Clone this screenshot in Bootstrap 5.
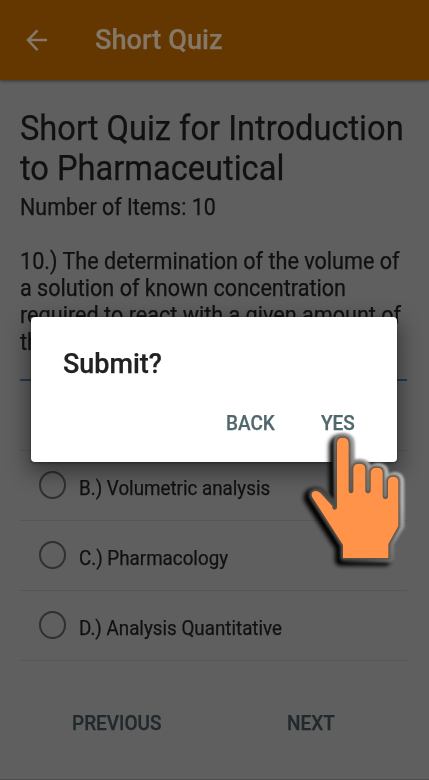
<!DOCTYPE html>
<html lang="en">
<head>
<meta charset="utf-8">
<meta name="viewport" content="width=device-width, initial-scale=1">
<title>Short Quiz</title>
<link href="https://cdn.jsdelivr.net/npm/bootstrap@5.3.0/dist/css/bootstrap.min.css" rel="stylesheet">
<style>
body{font-family:Roboto,sans-serif;background:#5f5f5f;color:#111;width:429px;height:780px;overflow:hidden}
.app-bar{height:80px;background:#643600;color:#857867;box-shadow:0 1px 3px rgba(0,0,0,.45);padding-left:26px}
.app-bar svg{width:21px;height:23px;margin-right:48px}
.fit{display:inline-block;transform-origin:0 50%;white-space:nowrap;transform:scaleX(.95);-webkit-text-stroke:.25px currentColor}
.bar-title{font-size:28px;font-weight:500;line-height:32px;transform:scaleX(.972)}
.quiz{padding:28px 22px 0 20px}
.quiz-title{font-size:34.4px;line-height:40.3px;font-weight:400}
.quiz-title .fit{transform:scaleX(.948)}
.body-text{font-size:23px;line-height:27px}
.body-text .fit{transform:scaleX(.939)}
.items .fit{transform:scaleX(.933)}
.items{padding-top:1px}
.question{margin-top:27px;height:105px}
.rule{height:2px;background:#1d3c59;margin-top:26px}
.option{height:70px;border-bottom:1px solid #565656;padding:0 0 0 19px}
.ring{width:27px;height:28px;border:2.8px solid #303030;border-radius:50%;margin-right:13px}
.option .option-text{font-size:20px;line-height:24px;padding-top:6px;transform:scaleX(.939)}
.nav-text{font-size:20px;line-height:24px;font-weight:500;color:#20292c}
.pager{padding:50px 70px 0 52px}
.scrim{position:absolute;inset:0}
.ask{position:absolute;left:30.5px;top:317px;width:366px;height:145px;background:#fff;border-radius:4px;box-shadow:0 8px 22px 3px rgba(0,0,0,.42),0 1px 3px rgba(0,0,0,.4);padding:30px 40px 0 32.5px}
.ask .ask-title{font-size:28px;line-height:33px;font-weight:500;color:#222;transform:scaleX(.963)}
.ask-btn{font-size:20px;line-height:24px;font-weight:500;color:#50686c}
.ask-actions{gap:43px;margin-top:31px}
.hand{position:absolute;left:290px;top:400px;width:139px;height:180px}
.foot{position:absolute;left:0;right:0;bottom:0;height:1px;background:#4c4c4c}
</style>
</head>
<body class="position-relative">
<header class="app-bar d-flex align-items-center">
<svg viewBox="0 0 21 24" fill="none" stroke="currentColor" stroke-width="2.6" preserveAspectRatio="none"><path d="M21 11.5H2M11.5 1.5L2 11.5L11.5 22"/></svg>
<span class="fit bar-title">Short Quiz</span>
</header>
<main class="quiz">
<h1 class="quiz-title m-0"><span class="fit">Short Quiz for Introduction</span><br><span class="fit">to Pharmaceutical</span></h1>
<div class="body-text items mt-1"><span class="fit">Number of Items: 10</span></div>
<div class="question body-text"><span class="fit">10.) The determination of the volume of</span><br><span class="fit">a solution of known concentration</span><br><span class="fit">required to react with a given amount of</span><br><span class="fit">the</span></div>
<div class="rule"></div>
<div class="options">
<div class="option"></div>
<div class="option d-flex align-items-center"><span class="ring"></span><span class="fit option-text">B.) Volumetric analysis</span></div>
<div class="option d-flex align-items-center"><span class="ring"></span><span class="fit option-text">C.) Pharmacology</span></div>
<div class="option d-flex align-items-center"><span class="ring"></span><span class="fit option-text">D.) Analysis Quantitative</span></div>
</div>
<div class="pager d-flex justify-content-between"><span class="fit nav-text">PREVIOUS</span><span class="fit nav-text">NEXT</span></div>
</main>
<div class="scrim">
<section class="ask" role="dialog" aria-label="Submit?">
<div><span class="fit ask-title">Submit?</span></div>
<div class="ask-actions d-flex justify-content-end"><span class="fit ask-btn">BACK</span><span class="fit ask-btn">YES</span></div>
</section>
<svg class="hand" viewBox="0 0 417 540">
<defs>
<path id="hand" d="M141 322V130Q141 113 158 113Q176 113 176 130V271Q176 280 183 280Q190 280 190 271V207Q190 191 208 191Q226 191 226 207V271Q226 280 234 280Q242 280 242 271V219Q242 203 260 203Q278 203 278 219V288Q278 297 286 297Q294 297 294 288V245Q294 230 310 230Q325 230 325 246V378L295 432V474H159V435L66 290Q62 276 75 273Q85 273 92 280L127 318V322Q127 329 134 329Q141 329 141 322Z"/>
<linearGradient id="bevel" gradientUnits="userSpaceOnUse" x1="70" y1="400" x2="300" y2="260"><stop offset="0" stop-color="#111"/><stop offset=".45" stop-color="#555"/><stop offset="1" stop-color="#b5b5b5"/></linearGradient>
<filter id="soft" x="-20%" y="-20%" width="140%" height="140%"><feGaussianBlur stdDeviation="6"/></filter>
<filter id="edge" x="-20%" y="-20%" width="140%" height="140%"><feGaussianBlur stdDeviation="2.5"/></filter>
</defs>
<use href="#hand" transform="translate(-9 8)" fill="#000" stroke="#000" stroke-width="30" stroke-linejoin="round" filter="url(#soft)"/>
<use href="#hand" transform="translate(4 0)" fill="#555" stroke="url(#bevel)" stroke-width="28" stroke-linejoin="round" filter="url(#edge)"/>
<use href="#hand" fill="#5b5045" stroke="#5b5248" stroke-width="11" stroke-linejoin="round" filter="url(#edge)"/>
<use href="#hand" fill="#ff934a"/>
</svg>
</div>
<div class="foot"></div>
<script src="https://cdn.jsdelivr.net/npm/bootstrap@5.3.0/dist/js/bootstrap.bundle.min.js"></script>
</body>
</html>
